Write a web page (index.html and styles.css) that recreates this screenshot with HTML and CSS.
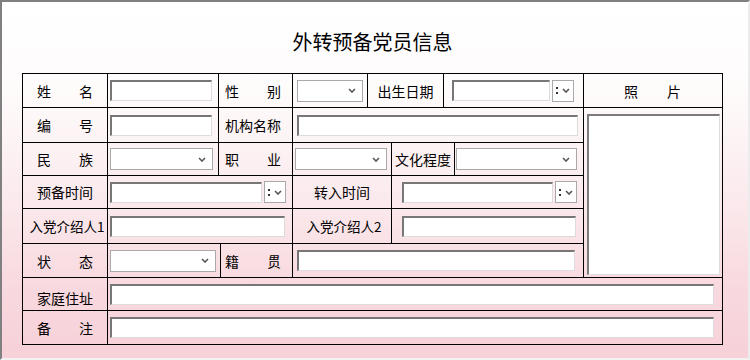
FILE: index.html
```html
<!DOCTYPE html>
<html lang="zh-CN">
<head>
    <meta charset="UTF-8">
    <title>外转预备党员信息</title>
    <link rel="stylesheet" href="styles.css">
</head>
<body>
<div class="page">
    <h1 class="title">外转预备党员信息</h1>

    <div class="form">
        <!-- row 1 -->
        <div class="cell lbl pair g1-2"><span>姓</span><span>名</span></div>
        <div class="cell g2-3"><input class="txt w102" type="text"></div>
        <div class="cell lbl pair2 g3-5"><span>性</span><span>别</span></div>
        <div class="cell pl4 g5-6">
            <div class="sel w66"><svg width="8" height="5" viewBox="0 0 8 5"><polyline points="1,1 4,4 7,1" /></svg></div>
        </div>
        <div class="cell lbl center g6-8">出生日期</div>
        <div class="cell pl8 g8-10">
            <input class="txt w98" type="text">
            <div class="pick"><svg class="dots" width="2" height="9" viewBox="0 0 2 9"><rect x="0" y="1" width="2" height="2" /><rect x="0" y="6" width="2" height="2" /></svg><svg width="8" height="5" viewBox="0 0 8 5"><polyline points="1,1 4,4 7,1" /></svg></div>
        </div>
        <div class="cell lbl photo-head g10-11"><span>照</span><span>片</span></div>

        <!-- row 2 -->
        <div class="cell lbl pair g1-2"><span>编</span><span>号</span></div>
        <div class="cell g2-3"><input class="txt w102" type="text"></div>
        <div class="cell lbl pair2 g3-5">机构名称</div>
        <div class="cell pl4 g5-10"><input class="txt w281" type="text"></div>
        <div class="cell photo g10-11"><div class="photo-box"></div></div>

        <!-- row 3 -->
        <div class="cell lbl pair g1-2"><span>民</span><span>族</span></div>
        <div class="cell g2-3">
            <div class="sel w103"><svg width="8" height="5" viewBox="0 0 8 5"><polyline points="1,1 4,4 7,1" /></svg></div>
        </div>
        <div class="cell lbl pair2 g3-5"><span>职</span><span>业</span></div>
        <div class="cell g5-7">
            <div class="sel w92"><svg width="8" height="5" viewBox="0 0 8 5"><polyline points="1,1 4,4 7,1" /></svg></div>
        </div>
        <div class="cell lbl center g7-9">文化程度</div>
        <div class="cell pl1 g9-10">
            <div class="sel w121"><svg width="8" height="5" viewBox="0 0 8 5"><polyline points="1,1 4,4 7,1" /></svg></div>
        </div>

        <!-- row 4 -->
        <div class="cell lbl center g1-2">预备时间</div>
        <div class="cell g2-5">
            <input class="txt w152" type="text">
            <div class="pick"><svg class="dots" width="2" height="9" viewBox="0 0 2 9"><rect x="0" y="1" width="2" height="2" /><rect x="0" y="6" width="2" height="2" /></svg><svg width="8" height="5" viewBox="0 0 8 5"><polyline points="1,1 4,4 7,1" /></svg></div>
        </div>
        <div class="cell lbl center g5-7">转入时间</div>
        <div class="cell pl10 g7-10">
            <input class="txt w151" type="text">
            <div class="pick"><svg class="dots" width="2" height="9" viewBox="0 0 2 9"><rect x="0" y="1" width="2" height="2" /><rect x="0" y="6" width="2" height="2" /></svg><svg width="8" height="5" viewBox="0 0 8 5"><polyline points="1,1 4,4 7,1" /></svg></div>
        </div>

        <!-- row 5 -->
        <div class="cell lbl center tight g1-2">入党介绍人1</div>
        <div class="cell g2-5"><input class="txt w175" type="text"></div>
        <div class="cell lbl center tight g5-7">入党介绍人2</div>
        <div class="cell pl10 g7-10"><input class="txt w174" type="text"></div>

        <!-- row 6 -->
        <div class="cell lbl pair g1-2"><span>状</span><span>态</span></div>
        <div class="cell g2-4">
            <div class="sel w106"><svg width="8" height="5" viewBox="0 0 8 5"><polyline points="1,1 4,4 7,1" /></svg></div>
        </div>
        <div class="cell lbl pair3 g4-5"><span>籍</span><span>贯</span></div>
        <div class="cell pl4 g5-10"><input class="txt w278" type="text"></div>

        <!-- row 7 -->
        <div class="cell lbl pair low g1-2">家庭住址</div>
        <div class="cell g2-11"><input class="txt wide" type="text"></div>

        <!-- row 8 -->
        <div class="cell lbl pair g1-2"><span>备</span><span>注</span></div>
        <div class="cell g2-11"><input class="txt wide" type="text"></div>
    </div>
</div>
</body>
</html>
```

FILE: styles.css
```css
body {
    margin: 0;
    font-family: "Noto Sans CJK SC", "Liberation Sans", sans-serif;
    color: #000;
}
.page {
    width: 750px;
    height: 360px;
    box-sizing: border-box;
    border: 2px solid;
    border-color: #808080 #ececec #f3f3f3 #808080;
    padding-left: 20px;
    background: linear-gradient(to bottom, #ffffff 0%, #fefbfb 25%, #fbeaed 55%, #f8d9df 80%, #f7d0d8 100%);
}
.title {
    width: 701px;
    margin: 0 0 19px 0;
    padding-top: 28px;
    font-size: 20px;
    font-weight: normal;
    line-height: 24px;
    text-align: center;
}

/* form grid: column tracks follow the table lines */
.form {
    display: grid;
    width: 700px;
    grid-template-columns: 85px 111px 2px 72px 75px 24px 52px 11px 129px 139px;
    grid-template-rows: 34px 35px 33px 33px 35px 34px 33px 34px;
    border-top: 1px solid #000;
    border-left: 1px solid #000;
}
.cell {
    display: flex;
    align-items: center;
    box-sizing: border-box;
    border-right: 1px solid #000;
    border-bottom: 1px solid #000;
    padding-left: 2px;
    min-width: 0;
}
.g1-2 { grid-column: 1 / 2; }
.g2-3 { grid-column: 2 / 3; }
.g2-4 { grid-column: 2 / 4; }
.g2-5 { grid-column: 2 / 5; }
.g2-11 { grid-column: 2 / 11; }
.g3-5 { grid-column: 3 / 5; }
.g4-5 { grid-column: 4 / 5; }
.g5-6 { grid-column: 5 / 6; }
.g5-7 { grid-column: 5 / 7; }
.g5-10 { grid-column: 5 / 10; }
.g6-8 { grid-column: 6 / 8; }
.g7-9 { grid-column: 7 / 9; }
.g7-10 { grid-column: 7 / 10; }
.g8-10 { grid-column: 8 / 10; }
.g9-10 { grid-column: 9 / 10; }
.g10-11 { grid-column: 10 / 11; }

.pl1 { padding-left: 1px; }
.pl4 { padding-left: 4px; }
.pl8 { padding-left: 8px; }
.pl10 { padding-left: 10px; }

/* labels */
.lbl {
    font-size: 14px;
    white-space: nowrap;
}
.center {
    justify-content: center;
    padding-left: 0;
}
.pair {
    justify-content: space-between;
    padding: 0 14px 0 14px;
}
.pair2 {
    justify-content: space-between;
    padding: 0 11px 0 6px;
}
.pair3 {
    justify-content: space-between;
    padding: 0 11px 0 4px;
}
.photo-head {
    justify-content: space-between;
    padding: 0 41px 0 40px;
}
.tight {
    font-size: 13.5px;
    padding-left: 4px;
}
.low {
    padding-top: 7px;
}

/* photo */
.photo {
    grid-row: 2 / 7;
    align-items: stretch;
    padding: 6px 2px 2px 3px;
}
.photo-box {
    flex: 1;
    background: #fff;
    border-style: solid;
    border-width: 2px 1px 1px 2px;
    border-color: #7c7c7c #dedede #dedede #7c7c7c;
}

/* inputs */
.txt {
    box-sizing: border-box;
    height: 21px;
    margin: 0;
    padding: 0;
    background: #fff;
    border-style: solid;
    border-width: 2px 1px 1px 2px;
    border-color: #777 #dcdcdc #dcdcdc #777;
    outline: none;
}
.w98 { width: 98px; }
.w102 { width: 102px; }
.w151 { width: 151px; }
.w152 { width: 152px; }
.w174 { width: 174px; }
.w175 { width: 175px; }
.w278 { width: 278px; }
.w281 { width: 281px; }
.wide { width: 604px; }

.sel {
    box-sizing: border-box;
    height: 22px;
    display: flex;
    align-items: center;
    justify-content: flex-end;
    padding-right: 6px;
    background: #fff;
    border: 1px solid #a9a9a9;
}
.w66 { width: 66px; }
.w92 { width: 92px; }
.w103 { width: 103px; }
.w106 { width: 106px; }
.w121 { width: 121px; }

.sel svg, .pick svg {
    fill: none;
    stroke: #555;
    stroke-width: 1.6;
}

/* date picker button */
.pick {
    box-sizing: border-box;
    width: 22px;
    height: 22px;
    margin-left: 2px;
    display: flex;
    align-items: center;
    padding-left: 3px;
    gap: 4px;
    background: #fff;
    border: 1px solid #a9a9a9;
}
.pick .dots {
    fill: #333;
    stroke: none;
}
```
